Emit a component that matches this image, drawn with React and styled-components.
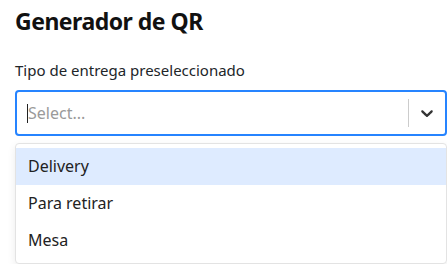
import styled, { createGlobalStyle } from "styled-components"

const Global = createGlobalStyle`
    body {
        margin: 0;
        background: #ffffff;
        font-family: "Noto Sans", "Open Sans", sans-serif;
        color: #212529;
    }
`

const options = ["Delivery", "Para retirar", "Mesa"]

export default function App(){

    return(
        <Page>
            <Global />
            <Title>Generador de QR</Title>
            <Label>Tipo de entrega preseleccionado</Label>
            <SelectWrap>
                <Control>
                    <ValueArea>
                        <Caret />
                        <Placeholder>Select...</Placeholder>
                    </ValueArea>
                    <Indicators>
                        <Separator />
                        <Chevron>
                            <svg width="20" height="20" viewBox="0 0 20 20">
                                <path fill="#333" d="M4.516 7.548c0.436-0.446 1.043-0.481 1.576 0l3.908 3.747 3.908-3.747c0.533-0.481 1.141-0.446 1.574 0 0.436 0.445 0.408 1.197 0 1.615-0.406 0.418-4.695 4.502-4.695 4.502-0.217 0.223-0.502 0.335-0.787 0.335s-0.57-0.112-0.789-0.335c0 0-4.287-4.084-4.695-4.502s-0.436-1.170 0-1.615z"/>
                            </svg>
                        </Chevron>
                    </Indicators>
                </Control>
                <Menu>
                    {options.map((o, i) => (
                        <Option key={o} $active={i === 0}>{o}</Option>
                    ))}
                </Menu>
            </SelectWrap>
        </Page>
    )
}

const Page = styled.div`
    padding: 6px 0 0 15px;
    width: 432px;
`

const Title = styled.h1`
    margin: 0;
    font-size: 23px;
    font-weight: 700;
    letter-spacing: -0.5px;
    line-height: 30px;
    color: #111;
`

const Label = styled.div`
    margin-top: 24px;
    font-size: 15px;
    line-height: 20px;
`

const SelectWrap = styled.div`
    margin-top: 10px;
`

const Control = styled.div`
    display: flex;
    align-items: center;
    height: 46px;
    box-sizing: border-box;
    border: 2px solid #2684ff;
    border-radius: 4px;
    background: #fff;
`

const ValueArea = styled.div`
    flex: 1;
    display: flex;
    align-items: center;
    padding-left: 10px;
`

const Caret = styled.span`
    width: 1px;
    height: 19px;
    background: #222;
`

const Placeholder = styled.span`
    color: #9a9a9a;
    font-size: 16px;
`

const Indicators = styled.div`
    display: flex;
    align-items: center;
    align-self: stretch;
`

const Separator = styled.span`
    width: 1px;
    align-self: stretch;
    margin: 7px 0;
    background: #cccccc;
`

const Chevron = styled.div`
    display: flex;
    padding: 8px;
`

const Menu = styled.div`
    margin-top: 7px;
    padding: 4px 0;
    background: #fff;
    border: 1px solid #e3e3e3;
    border-radius: 4px;
    box-shadow: 0 3px 8px hsla(0, 0%, 0%, 0.08);
`

const Option = styled.div`
    padding: 8px 12px;
    font-size: 16px;
    line-height: 21px;
    background: ${p => p.$active ? "#deebff" : "transparent"};
    color: #222;
`
